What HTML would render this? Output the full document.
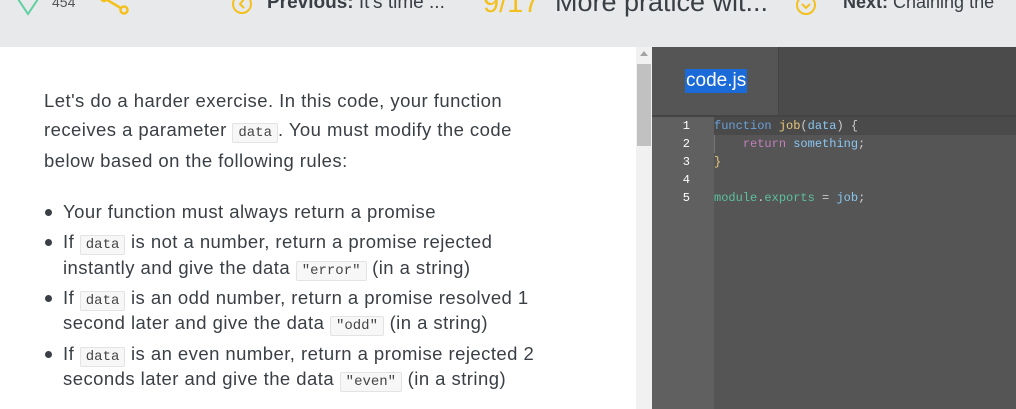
<!DOCTYPE html>
<html><head><meta charset="utf-8"><style>
*{margin:0;padding:0;box-sizing:border-box}
body{width:1016px;height:409px;overflow:hidden;position:relative;background:#fff;font-family:"Liberation Sans",sans-serif;color:#3a3f45}
.top{position:absolute;left:0;top:0;width:1016px;height:47px;background:#e8e9eb;overflow:hidden}
.t{position:absolute;white-space:nowrap}
.l{position:absolute;left:44px;font-size:18.5px;letter-spacing:0.45px;white-space:nowrap;line-height:22px}
.b{left:63px}
.dot{position:absolute;left:45px;width:7px;height:7px;border-radius:50%;background:#3a3f45}
code{font-family:"Liberation Mono",monospace;font-size:14px;letter-spacing:0;background:#f7f7f7;border:1px solid #e3e3e3;border-radius:2px;padding:1px 5px;color:#444}
.ed{position:absolute;left:652px;top:47px;width:364px;height:362px;background:#555}
.cl{position:absolute;font-family:"Liberation Mono",monospace;font-size:12px;white-space:pre;line-height:18px}
.n{left:26px;color:#fff;width:12px;text-align:right}
</style></head><body>
<div class="top">
<svg class="t" style="left:14px;top:-6px" width="28" height="24"><path d="M2 2 L14 20 L26 2" fill="none" stroke="#5fd0a0" stroke-width="2"/></svg>
<div class="t" style="left:52px;top:-6px;font-size:14px;color:#555">454</div>
<svg class="t" style="left:98px;top:-4px" width="34" height="22"><path d="M6 2 L16 8 L26 14" fill="none" stroke="#f4c01e" stroke-width="2.5"/><circle cx="6" cy="2" r="3" fill="none" stroke="#f4c01e" stroke-width="2.5"/><circle cx="26" cy="14" r="3.5" fill="#e8e9eb" stroke="#f4c01e" stroke-width="2.5"/></svg>
<svg class="t" style="left:231px;top:-6px" width="22" height="24"><circle cx="11" cy="10" r="9" fill="none" stroke="#f4c01e" stroke-width="2"/><path d="M13 5 L9 10 L13 14" fill="none" stroke="#f4c01e" stroke-width="2"/></svg>
<div class="t" style="left:267px;top:-8px;font-size:19px;color:#3a3f45"><b>Previous:</b> It's time ...</div>
<div class="t" style="left:483px;top:-13px;font-size:29px;color:#f4c01e">9/17</div>
<div class="t" style="left:555px;top:-13px;font-size:27px;color:#3a3f45">More pratice wit...</div>
<svg class="t" style="left:795px;top:-4px" width="22" height="24"><circle cx="11" cy="9" r="9" fill="none" stroke="#f4c01e" stroke-width="2"/><path d="M7 8 L11 12 L15 8" fill="none" stroke="#f4c01e" stroke-width="2"/></svg>
<div class="t" style="left:843px;top:-8px;font-size:18px;color:#3a3f45"><b>Next:</b> Chaining the</div>
</div>
<div style="position:absolute;left:636px;top:47px;width:16px;height:362px;background:#f1f1f1"></div>
<div style="position:absolute;left:637px;top:64px;width:14px;height:82px;background:#c1c1c1"></div>
<svg style="position:absolute;left:640px;top:51px" width="8" height="6"><path d="M0 5 L4 0 L8 5Z" fill="#a3a3a3"/></svg>

<div class="l" style="top:90px">Let's do a harder exercise. In this code, your function</div>
<div class="l" style="top:119px">receives a parameter <code>data</code>. You must modify the code</div>
<div class="l" style="top:150px">below based on the following rules:</div>

<div class="dot" style="top:209px"></div><div class="l b" style="top:201px">Your function must always return a promise</div>
<div class="dot" style="top:239px"></div><div class="l b" style="top:231px">If <code>data</code> is not a number, return a promise rejected</div>
<div class="l b" style="top:257px">instantly and give the data <code>"error"</code> (in a string)</div>
<div class="dot" style="top:295px"></div><div class="l b" style="top:287px">If <code>data</code> is an odd number, return a promise resolved 1</div>
<div class="l b" style="top:312px">second later and give the data <code>"odd"</code> (in a string)</div>
<div class="dot" style="top:351px"></div><div class="l b" style="top:343px">If <code>data</code> is an even number, return a promise rejected 2</div>
<div class="l b" style="top:368px">seconds later and give the data <code>"even"</code> (in a string)</div>

<div class="ed">
<div style="position:absolute;left:126px;top:0;width:238px;height:68px;background:#4b4b4b"></div>
<div style="position:absolute;left:126px;top:0;width:1px;height:68px;background:#444"></div>
<div style="position:absolute;left:0;top:68px;width:364px;height:2px;background:#444"></div>
<div style="position:absolute;left:33px;top:22px;background:#1a6ad8;color:#fff;font-size:19px;padding:1px 1px;line-height:22px">code.js</div>
<div style="position:absolute;left:0;top:70px;width:62px;height:292px;background:#606060"></div>
<div style="position:absolute;left:62px;top:70px;width:302px;height:18px;background:#4a4a4a"></div>
<div style="position:absolute;left:62px;top:88px;width:1px;height:18px;background:#777"></div>
<div class="cl n" style="top:70px">1</div><div class="cl n" style="top:88px">2</div><div class="cl n" style="top:106px">3</div><div class="cl n" style="top:124px">4</div><div class="cl n" style="top:142px">5</div>
<div class="cl" style="left:62px;top:70px"><span style="color:#6aa0d8">function</span> <span style="color:#e8c87a">job</span><span style="color:#ccc">(</span><span style="color:#8ac6f2">data</span><span style="color:#ccc">) {</span></div>
<div class="cl" style="left:62px;top:88px">    <span style="color:#c080b8">return</span> <span style="color:#8ac6f2">something</span><span style="color:#ccc">;</span></div>
<div class="cl" style="left:62px;top:106px;color:#e8c87a">}</div>
<div class="cl" style="left:62px;top:142px"><span style="color:#5cc0a0">module</span><span style="color:#ccc">.</span><span style="color:#5cc0a0">exports</span> <span style="color:#ccc">=</span> <span style="color:#8ac6f2">job</span><span style="color:#ccc">;</span></div>
</div>
</body></html>
